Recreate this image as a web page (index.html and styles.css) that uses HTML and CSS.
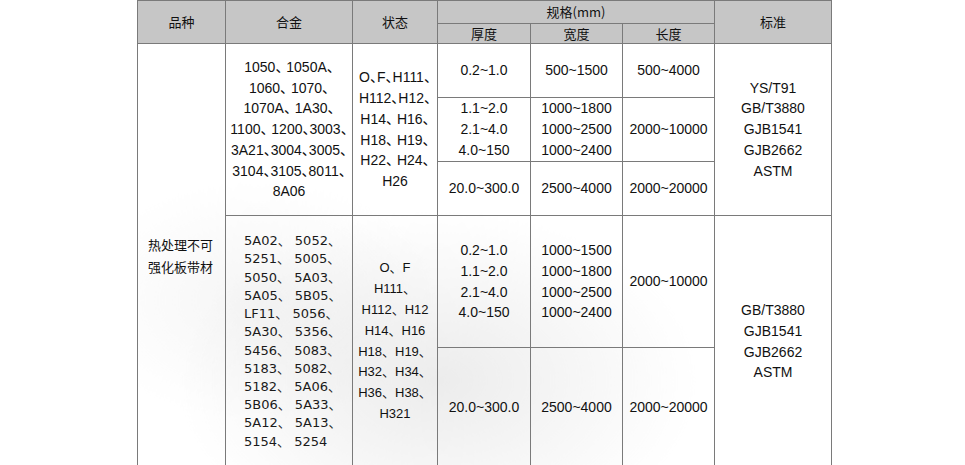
FILE: index.html
```html
<!DOCTYPE html>
<html lang="zh">
<head>
<meta charset="utf-8">
<title>铝板规格</title>
<link rel="stylesheet" href="styles.css">
</head>
<body>
<table class="spec">
  <colgroup>
    <col class="c-kind">
    <col class="c-alloy">
    <col class="c-state">
    <col class="c-thk">
    <col class="c-wid">
    <col class="c-len">
    <col class="c-std">
  </colgroup>
  <thead>
    <tr class="h1">
      <th rowspan="2">品种</th>
      <th rowspan="2">合金</th>
      <th rowspan="2">状态</th>
      <th colspan="3">规格(mm)</th>
      <th rowspan="2">标准</th>
    </tr>
    <tr class="h2">
      <th>厚度</th>
      <th>宽度</th>
      <th>长度</th>
    </tr>
  </thead>
  <tbody>
    <tr class="r1">
      <td rowspan="5" class="kind">热处理不可<br>强化板带材</td>
      <td rowspan="3" class="num half">1050、 1050A、<br>1060、 1070、<br>1070A、 1A30、<br>1100、 1200、3003、<br>3A21、3004、3005、<br>3104、3105、8011、<br>8A06</td>
      <td rowspan="3" class="num half">O、F、H111、<br>H112、H12、<br>H14、 H16、<br>H18、 H19、<br>H22、 H24、<br>H26</td>
      <td class="num">0.2~1.0</td>
      <td class="num">500~1500</td>
      <td class="num">500~4000</td>
      <td rowspan="3" class="num">YS/T91<br>GB/T3880<br>GJB1541<br>GJB2662<br>ASTM</td>
    </tr>
    <tr class="r2">
      <td class="num">1.1~2.0<br>2.1~4.0<br>4.0~150</td>
      <td class="num">1000~1800<br>1000~2500<br>1000~2400</td>
      <td class="num">2000~10000</td>
    </tr>
    <tr class="r3">
      <td class="num">20.0~300.0</td>
      <td class="num">2500~4000</td>
      <td class="num">2000~20000</td>
    </tr>
    <tr class="r4">
      <td rowspan="2" class="list">5A02、 5052、<br>5251、 5005、<br>5050、 5A03、<br>5A05、 5B05、<br>LF11、 5056、<br>5A30、 5356、<br>5456、 5083、<br>5183、 5082、<br>5182、 5A06、<br>5B06、 5A33、<br>5A12、 5A13、<br>5154、 5254</td>
      <td rowspan="2" class="num state2">O、F<br>H111、<br>H112、H12<br>H14、H16<br>H18、H19、<br>H32、H34、<br>H36、H38、<br>H321</td>
      <td class="num">0.2~1.0<br>1.1~2.0<br>2.1~4.0<br>4.0~150</td>
      <td class="num">1000~1500<br>1000~1800<br>1000~2500<br>1000~2400</td>
      <td class="num">2000~10000</td>
      <td rowspan="2" class="num">GB/T3880<br>GJB1541<br>GJB2662<br>ASTM</td>
    </tr>
    <tr class="r5">
      <td class="num">20.0~300.0</td>
      <td class="num">2500~4000</td>
      <td class="num">2000~20000</td>
    </tr>
  </tbody>
</table>
</body>
</html>
```
FILE: styles.css
```css
html, body {
  margin: 0;
  padding: 0;
  background: #ffffff;
}

body {
  font-family: "Liberation Sans", "Noto Sans CJK SC", sans-serif;
  color: #111111;
}

.spec {
  margin: 0 0 0 137px;
  border-collapse: collapse;
  table-layout: fixed;
  width: 694px;
  background:
    radial-gradient(ellipse 260px 170px at 300px 380px, rgba(200,200,200,0.35), rgba(255,255,255,0) 100%),
    radial-gradient(ellipse 180px 120px at 120px 300px, rgba(215,215,215,0.25), rgba(255,255,255,0) 100%),
    #ffffff;
}

.c-kind { width: 88px; }
.c-alloy { width: 127px; }
.c-state { width: 85px; }
.c-thk { width: 93px; }
.c-wid { width: 92px; }
.c-len { width: 92px; }
.c-std { width: 117px; }

.spec th,
.spec td {
  border: 1px solid #7a7a7a;
  padding: 0;
  text-align: center;
  vertical-align: middle;
  white-space: nowrap;
}

.spec th {
  background: #c6c6c6;
  font-family: "Noto Sans CJK SC", "Liberation Sans", sans-serif;
  font-weight: normal;
  font-size: 13px;
  color: #111111;
  line-height: 18px;
}

.h1 { height: 23px; }
.h2 { height: 20px; }
.r1 { height: 54px; }
.r2 { height: 64px; }
.r3 { height: 54px; }
.r4 { height: 132px; }
.r5 { height: 120px; }

.num {
  font-family: "Liberation Sans", "Noto Sans CJK SC", sans-serif;
  font-size: 14px;
  line-height: 20.7px;
}

.half {
  font-feature-settings: "halt" 1;
}

.state2 {
  font-size: 13px;
  line-height: 20.9px;
}

.kind {
  text-align: left !important;
  padding-left: 10px !important;
  font-family: "Noto Sans CJK SC", sans-serif;
  font-size: 13px;
  line-height: 22px;
}

.list {
  text-align: left !important;
  padding-left: 18px !important;
  font-family: "DejaVu Sans", "Noto Sans CJK SC", sans-serif;
  font-size: 13px;
  line-height: 18.2px;
  color: #1a1a1a;
}
```
